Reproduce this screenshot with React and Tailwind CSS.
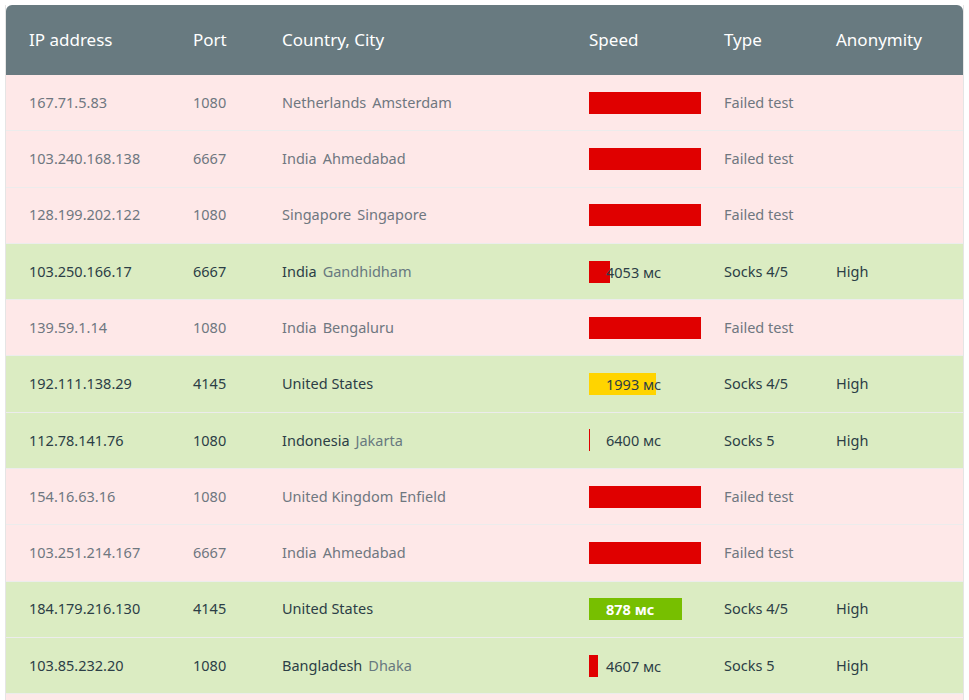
import React from "react";

const rows = [
  ["167.71.5.83", "1080", "Netherlands", "Amsterdam", null],
  ["103.240.168.138", "6667", "India", "Ahmedabad", null],
  ["128.199.202.122", "1080", "Singapore", "Singapore", null],
  ["103.250.166.17", "6667", "India", "Gandhidham", { ms: 4053, w: 21, c: "bg-[#e00000]" }, "Socks 4/5"],
  ["139.59.1.14", "1080", "India", "Bengaluru", null],
  ["192.111.138.29", "4145", "United States", "", { ms: 1993, w: 67, c: "bg-[#ffd400]" }, "Socks 4/5"],
  ["112.78.141.76", "1080", "Indonesia", "Jakarta", { ms: 6400, w: 1, c: "bg-[#e00000]" }, "Socks 5"],
  ["154.16.63.16", "1080", "United Kingdom", "Enfield", null],
  ["103.251.214.167", "6667", "India", "Ahmedabad", null],
  ["184.179.216.130", "4145", "United States", "", { ms: 878, w: 93, c: "bg-[#77bf00]", white: true }, "Socks 4/5"],
  ["103.85.232.20", "1080", "Bangladesh", "Dhaka", { ms: 4607, w: 9, c: "bg-[#e00000]" }, "Socks 5"],
];

export default function App() {
  return (
    <div className="h-[700px] overflow-hidden bg-white p-[5px] pb-0 font-['Lato','Liberation_Sans',sans-serif]">
      <div className="border-x border-[#e5e5e5]">
        <div className="flex h-[70px] items-center rounded-t-md bg-[#687a80] text-[17px] text-white">
          <div className="w-[187px] pl-[23px]">IP address</div>
          <div className="w-[89px]">Port</div>
          <div className="w-[307px]">Country, City</div>
          <div className="w-[135px]">Speed</div>
          <div className="w-[112px]">Type</div>
          <div>Anonymity</div>
        </div>
        {rows.map(([ip, port, country, city, sp, type], i) => {
          const ok = !!sp;
          return (
            <div
              key={i}
              className={`flex h-[56.3px] items-center border-b border-[#ececec] text-[14.5px] ${
                ok ? "bg-[#dbecc2] text-[#2c3e46]" : "bg-[#fee8e8] text-[#6f7780]"
              }`}
            >
              <div className="w-[187px] pl-[23px]">{ip}</div>
              <div className="w-[89px]">{port}</div>
              <div className="w-[307px]">
                {country}
                {city && <span className={`ml-1.5 ${ok ? "text-[#68797f]" : ""}`}>{city}</span>}
              </div>
              <div className="relative w-[135px]">
                {ok ? (
                  <div className="relative h-[22px]">
                    <div className={`absolute left-0 top-0 h-[22px] ${sp.c}`} style={{ width: sp.w }} />
                    <span className={`absolute left-[17px] top-[1px] whitespace-nowrap ${sp.white ? "font-bold text-white" : ""}`}>
                      {sp.ms} мс
                    </span>
                  </div>
                ) : (
                  <div className="h-[22px] w-[112px] bg-[#e00000]" />
                )}
              </div>
              <div className="w-[112px]">{ok ? type : "Failed test"}</div>
              <div>{ok ? "High" : ""}</div>
            </div>
          );
        })}
        <div className="h-[56px] bg-[#fee8e8]" />
      </div>
    </div>
  );
}
